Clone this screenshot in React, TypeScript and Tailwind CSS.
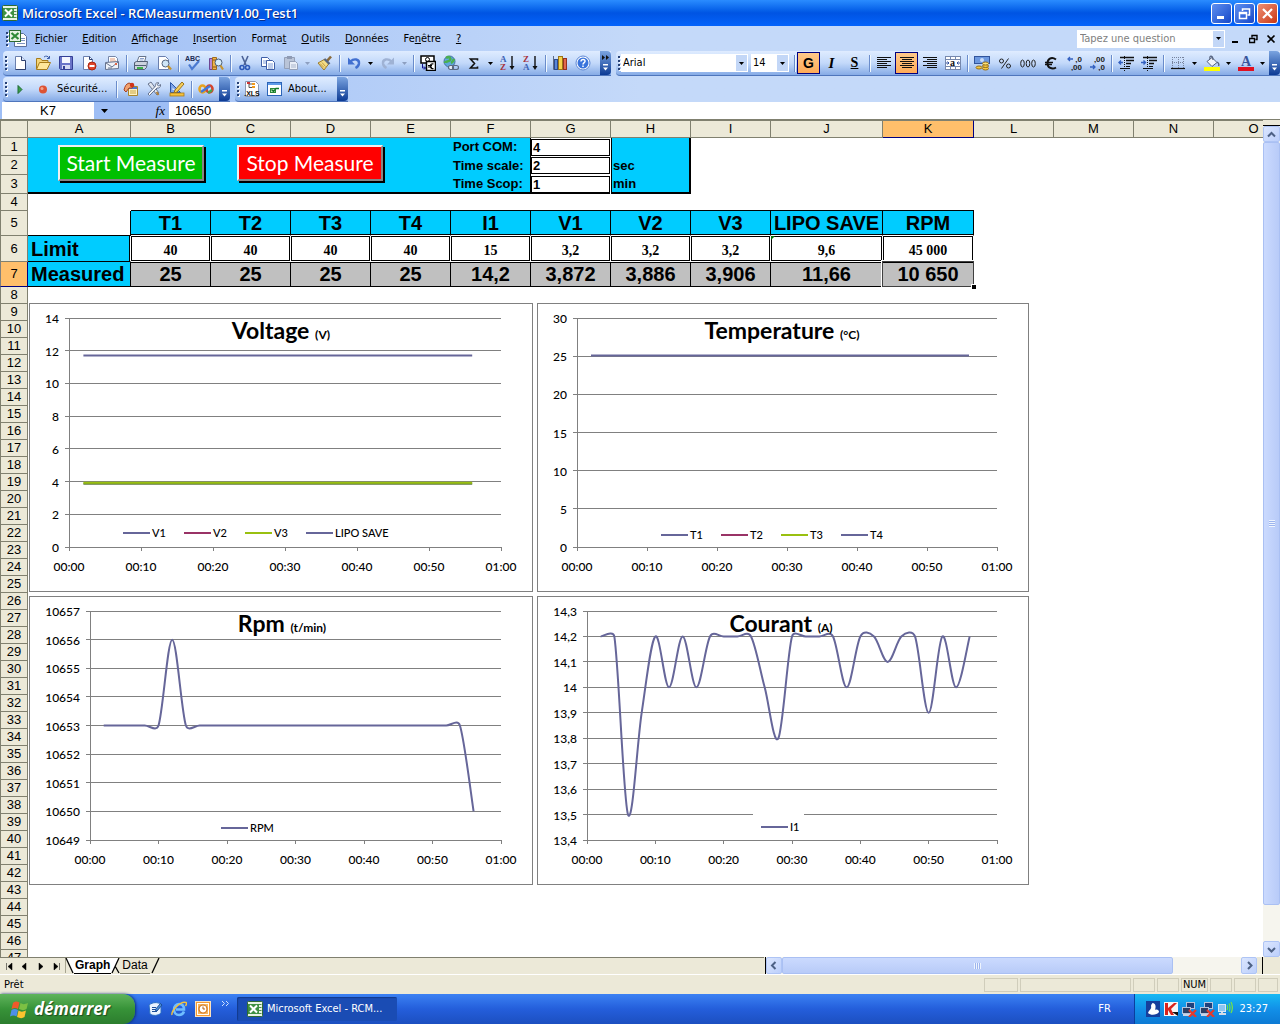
import type { ReactNode } from "react";

/* ------------------------------------------------------------------ */
/* Toolbar icons                                                       */
/* ------------------------------------------------------------------ */

const Svg = ({ children, w = 16, h = 16 }: { children: ReactNode; w?: number; h?: number }) => (
  <svg width={w} height={h} viewBox={`0 0 ${w} ${h}`} fill="none" aria-hidden="true" className="block shrink-0">
    {children}
  </svg>
);

const ExcelIcon = () => (
  <Svg>
    <rect x="0.5" y="0.5" width="15" height="15" rx="1" fill="#e8f3e4" stroke="#2f6b33" />
    <path d="M12 3.500h2.500M12 6.500h2.500M12 9.500h2.500M12 12.500h2.500" stroke="#4b8f4e" />
    <rect x="1" y="3" width="11" height="10" fill="#3f9142" />
    <path d="M3 4.500l7 7M10 4.500l-7 7" stroke="#fff" strokeWidth="2" />
  </Svg>
);
const BookIcon = () => (
  <Svg w={18} h={17}>
    <path d="M5.500 3.500h9l3 3v10h-12z" fill="#fff" stroke="#5a6f9c" />
    <path d="M12 8.500h4M12 10.500h4M8 13.500h8" stroke="#7d93c0" />
    <rect x="0.500" y="0.500" width="11" height="11" fill="#e8f3e4" stroke="#2f6b33" />
    <path d="M2.500 3l7 6M9.500 3l-7 6" stroke="#2f8a36" strokeWidth="2.200" />
  </Svg>
);
const NewIcon = () => (
  <Svg>
    <path d="M3.500 1.500h6l4 4v9h-10z" fill="#fff" stroke="#6a7fae" />
    <path d="M13.500 5.500v9h-10" stroke="#2b3e6e" />
    <path d="M9.500 1.500v4h4" fill="#d9e5fa" stroke="#2b3e6e" />
  </Svg>
);
const OpenIcon = () => (
  <Svg>
    <path d="M1.500 14V3.500h4l1.500 2h6V8" fill="#f5d67a" stroke="#a67c1c" />
    <path d="M1.500 14.500l3-7h11l-3.500 7z" fill="#ffe79a" stroke="#a67c1c" />
    <path d="M9 2c2-1.500 4-1 5 1M14.500 1v2.500H12" stroke="#3a5ca8" />
  </Svg>
);
const SaveIcon = () => (
  <Svg>
    <path d="M1.500 1.500h13v13h-12l-1-1z" fill="#6a74c8" stroke="#343f96" />
    <rect x="4" y="2" width="8" height="6" fill="#f4f6ff" />
    <rect x="4" y="10" width="8" height="4" fill="#d4d8f2" />
    <rect x="5" y="11" width="2" height="3" fill="#343f96" />
  </Svg>
);
const PermissionIcon = () => (
  <Svg>
    <path d="M2.500 1.500h6l3 3v10h-9z" fill="#fff" stroke="#6a7fae" />
    <path d="M8.500 1.500v3h3" stroke="#2b3e6e" />
    <circle cx="11" cy="11" r="4" fill="#e0442a" stroke="#a82612" />
    <path d="M8.500 11h5" stroke="#fff" strokeWidth="2" />
  </Svg>
);
const MailIcon = () => (
  <Svg>
    <path d="M4.500 7V1.500h7l2 2V7" fill="#fff" stroke="#7686a8" />
    <path d="M6 4h5M6 6h6" stroke="#e09a7a" />
    <path d="M1.500 7.500l13-1v7l-13 1z" fill="#f0f3f9" stroke="#67748f" />
    <path d="M2 8l6 4 6-5M4 13h4" stroke="#67748f" />
    <rect x="11" y="8" width="2" height="2" fill="#e0674a" />
  </Svg>
);
const PrintIcon = () => (
  <Svg>
    <path d="M4 7l2-5.500h7L11.500 7" fill="#fff" stroke="#66748c" />
    <path d="M1.500 7.500l2-1h11l-1 6-2 2h-10z" fill="#ccd3de" stroke="#525e74" />
    <path d="M2 10.500h11" stroke="#525e74" />
    <path d="M4 13h6" stroke="#3bb14a" strokeWidth="2" />
    <path d="M7 3.500h4M6.500 5h4" stroke="#8aa0cc" />
  </Svg>
);
const PreviewIcon = () => (
  <Svg>
    <path d="M2.500 1.500h7l3 3v10h-10z" fill="#fff" stroke="#6a7fae" />
    <circle cx="9.500" cy="8.500" r="3.500" fill="#cfe6f7" stroke="#55667f" />
    <path d="M12 11l3 3.500" stroke="#c7952f" strokeWidth="2.400" />
  </Svg>
);
const SpellIcon = () => (
  <Svg>
    <text x="0" y="6" fontSize="7" fontWeight="700" fill="#1d2c55" fontFamily="Liberation Sans, sans-serif">ABC</text>
    <path d="M4 9.500l3 4.500 7-8" stroke="#4a79d0" strokeWidth="2.200" />
  </Svg>
);
const ResearchIcon = () => (
  <Svg>
    <path d="M1.500 3.500h3v11h-3z" fill="#b78ad4" stroke="#6e4593" />
    <path d="M4.500 2.500h4v12h-4z" fill="#f0b64a" stroke="#a06b1a" />
    <path d="M5 5h3M5 12h3" stroke="#8b4f17" />
    <circle cx="10.500" cy="7.500" r="3.500" fill="#d5ecf8" stroke="#4b5d77" />
    <path d="M12.500 10.500l2.500 4" stroke="#c7952f" strokeWidth="2.200" />
  </Svg>
);
const CutIcon = () => (
  <Svg>
    <path d="M5 1l4 9M11 1L7 10" stroke="#4b6296" strokeWidth="1.600" />
    <circle cx="5" cy="12.500" r="2" stroke="#2c58b8" strokeWidth="1.600" />
    <circle cx="10.500" cy="12.500" r="2" stroke="#2c58b8" strokeWidth="1.600" />
  </Svg>
);
const CopyIcon = () => (
  <Svg>
    <path d="M1.500 2.500h6l2 2v7h-8z" fill="#fff" stroke="#3f5fa8" />
    <path d="M3 6h4M3 8h4" stroke="#7f9cd8" />
    <path d="M6.500 5.500h6l2 2v7h-8z" fill="#fff" stroke="#3f5fa8" />
    <path d="M8 9h5M8 11h5M8 13h5" stroke="#7f9cd8" />
  </Svg>
);
const PasteIcon = () => (
  <Svg>
    <path d="M1.500 2.500h10v11h-10z" fill="#b9c4d8" stroke="#94a0b8" />
    <rect x="4" y="1" width="5" height="3" fill="#8f9bb4" />
    <path d="M6.500 6.500h6l2 2v6h-8z" fill="#e9eef7" stroke="#94a0b8" />
    <path d="M8 10h5M8 12h5" stroke="#a9b5cc" />
  </Svg>
);
const PainterIcon = () => (
  <Svg>
    <path d="M10 6l4-4.500" stroke="#8a6a3a" strokeWidth="2.600" />
    <path d="M1 8l7-4 4 4.500-5 6.500z" fill="#f3dc86" stroke="#9b7a2b" />
    <path d="M7.500 4l5 5" stroke="#57657f" strokeWidth="2.400" />
    <path d="M3 8.500l4 4M5 7.500l3.500 4" stroke="#c49b3b" />
  </Svg>
);
const UndoIcon = () => (
  <Svg>
    <path d="M4.500 6.500C8 3 13.500 4 13 8.500c-.3 2-1.500 3.500-3.500 4.500" stroke="#4270d0" strokeWidth="2.400" />
    <path d="M2 2.500v7h7z" fill="#4270d0" />
  </Svg>
);
const RedoIcon = () => (
  <Svg>
    <path d="M11.500 6.500C8 3 2.500 4 3 8.500c.3 2 1.500 3.500 3.500 4.500" stroke="#9fb2d4" strokeWidth="2.400" />
    <path d="M14 2.500v7H7z" fill="#9fb2d4" />
  </Svg>
);
const EuroConvertIcon = () => (
  <Svg>
    <rect x="1" y="1" width="13" height="7" fill="#fff" stroke="#000" strokeWidth="1.500" />
    <circle cx="7.500" cy="4.500" r="2" stroke="#000" />
    <rect x="6.500" y="6.500" width="9" height="9" fill="#fff" stroke="#000" strokeWidth="1.500" />
    <path d="M13.500 9c-4-1.500-4.500 5.500 0 4.500M8 10.500h4M8 12h4" stroke="#000" strokeWidth="1.200" />
    <path d="M2.500 9v4h3M4 11.500L5.500 13 4 14.500" stroke="#10108c" />
  </Svg>
);
const LinkIcon = () => (
  <Svg>
    <circle cx="6.500" cy="6.500" r="5.500" fill="#5fa7dd" stroke="#44719d" />
    <path d="M3 3c3-2 5 0 4 2S2 6 2 8M8 8c2-1 3-4 3-4" stroke="#4bb04f" strokeWidth="2.600" />
    <rect x="5.500" y="10.500" width="5" height="4" rx="2" fill="#e8edf5" stroke="#5a6880" strokeWidth="1.200" />
    <rect x="9.500" y="10.500" width="6" height="4" rx="2" stroke="#5a6880" strokeWidth="1.200" />
  </Svg>
);
const SigmaIcon = () => (
  <Svg>
    <path d="M11.500 5.500V4H4.500l4 4.500-4 4.500h7v-1.500" stroke="#111" strokeWidth="1.600" />
  </Svg>
);
const SortIcon = ({ top, bottom }: { top: string; bottom: string }) => (
  <Svg>
    <text x="0" y="7" fontSize="9" fontWeight="700" fill={top === "A" ? "#3d63b5" : "#a8333c"} fontFamily="Liberation Serif, serif">{top}</text>
    <text x="0" y="15" fontSize="9" fontWeight="700" fill={bottom === "A" ? "#3d63b5" : "#a8333c"} fontFamily="Liberation Serif, serif">{bottom}</text>
    <path d="M12 1v12" stroke="#111" strokeWidth="1.400" />
    <path d="M9.500 11h5L12 15z" fill="#111" />
  </Svg>
);
const ChartIcon = () => (
  <Svg>
    <path d="M1.500 1v13.500H15" stroke="#5d6b86" />
    <rect x="2.500" y="4.500" width="3" height="10" fill="#5a86d8" stroke="#2d4b8e" />
    <rect x="6.500" y="1.500" width="4" height="13" fill="#f6d24b" stroke="#9b7416" />
    <rect x="11.500" y="3.500" width="3" height="11" fill="#e2694b" stroke="#963220" />
  </Svg>
);
const HelpIcon = () => (
  <Svg>
    <circle cx="8" cy="8" r="7" fill="#fff" stroke="#5c86d4" />
    <circle cx="8" cy="8" r="5.500" fill="#3a74dc" />
    <path d="M6 6.500c0-3 4.500-2.500 4 0-.2 1.200-2 1.300-2 3M8 10.500V12" stroke="#fff" strokeWidth="1.500" />
  </Svg>
);
const PlayIcon = () => (
  <Svg>
    <path d="M6 4.500v8l4-4z" fill="#3aa04a" stroke="#1f6b33" />
  </Svg>
);
const RecordIcon = () => (
  <Svg>
    <circle cx="8" cy="8.500" r="4" fill="#dd5334" />
    <circle cx="7" cy="7.500" r="1.500" fill="#f3a48e" />
  </Svg>
);
const ScriptIcon = () => (
  <Svg>
    <path d="M5.500 5.500h9v9h-9z" fill="#fff3c4" stroke="#a8862f" />
    <path d="M6 7h8" stroke="#4a79d0" strokeWidth="2" />
    <path d="M7 10h6M7 12h6" stroke="#c9a544" />
    <path d="M1 9c1-4 2-6 5-7l5 2-2 3-3 0-3 4z" fill="#f0a270" stroke="#a8401e" />
    <circle cx="9" cy="4" r="2.200" fill="#d0341c" />
  </Svg>
);
const ToolsIcon = () => (
  <Svg>
    <path d="M2 3l3-2 8 11-2 2z" fill="#dfe5ef" stroke="#67748f" />
    <path d="M13 2c-3-1-4 1-3.500 3L2 13l1.500 1.500L11 7c2 .5 4-1 3.500-3.500L12.500 5 11 3.500z" fill="#f2f5fa" stroke="#67748f" />
    <path d="M10.500 11l2 3" stroke="#b08038" strokeWidth="2" />
  </Svg>
);
const RulerIcon = () => (
  <Svg>
    <path d="M1.500 1.500v10h10z" fill="#7ea5ea" stroke="#2b55a8" />
    <path d="M3.500 6.500v2.500H6z" fill="#dce8fb" />
    <path d="M6 9l7-8 2 2-7 8-3 1z" fill="#f7cf5a" stroke="#99731c" />
    <rect x="1" y="12" width="14" height="3" fill="#f5c23d" stroke="#a87b15" strokeWidth="0.800" />
  </Svg>
);
const InfinityIcon = () => (
  <Svg>
    <ellipse cx="4.500" cy="8" rx="3" ry="3.500" stroke="#e8a31e" strokeWidth="2.600" />
    <ellipse cx="11.500" cy="8" rx="3" ry="3.500" stroke="#d6452c" strokeWidth="2.600" />
    <path d="M3 11l9-6" stroke="#3f78d8" strokeWidth="2.400" />
    <path d="M10 12l4-3" stroke="#46a64c" strokeWidth="2.200" />
  </Svg>
);
const XlsIcon = () => (
  <Svg>
    <path d="M1.500 .5h10l3 3v12h-13z" fill="#fff" stroke="#8a97b2" />
    <path d="M5 1.500v5M5 3h4M5 6.500h4" stroke="#555" />
    <rect x="3" y="1" width="3" height="2" fill="#c33" />
    <rect x="8" y="2" width="3" height="2" fill="#f09a1c" />
    <rect x="8" y="5" width="3" height="2" fill="#f09a1c" />
    <text x="8" y="15" textAnchor="middle" fontSize="7" fontWeight="700" fill="#111" fontFamily="Liberation Sans, sans-serif">.XLS</text>
  </Svg>
);
const AboutIcon = () => (
  <Svg>
    <rect x="0.500" y="1.500" width="14" height="13" fill="#fff" stroke="#2b64b8" />
    <rect x="1" y="2" width="13" height="2" fill="#5f9be8" />
    <rect x="3.500" y="7.500" width="5" height="4" fill="#b8e6b4" stroke="#2c8a3a" />
    <path d="M4.500 8.500l2 2L9 7.500h3" stroke="#167a2a" strokeWidth="1.300" />
  </Svg>
);
const AlignIcon = ({ kind }: { kind: "left" | "center" | "right" }) => {
  const x = { left: 1, center: 3, right: 5 }[kind];
  return (
    <Svg>
      <g fill="#111">
        {[2, 6, 10].map((y) => (
          <rect key={y} x="1" y={y} width="14" height="1" />
        ))}
        {[4, 8, 12].map((y) => (
          <rect key={y} x={x} y={y} width="10" height="1" />
        ))}
      </g>
    </Svg>
  );
};
const MergeIcon = () => (
  <Svg>
    <rect x="0.500" y="1.500" width="15" height="13" fill="#fff" stroke="#7688ad" />
    <path d="M0 4.500h16M0 11.500h16M5.500 1v3M10.500 1v3M5.500 12v3M10.500 12v3" stroke="#7688ad" />
    <text x="5" y="11" fontSize="10" fontWeight="700" fill="#111" fontFamily="Liberation Serif, serif">a</text>
    <path d="M1 8h3M12 8h3M2.500 6.500L4 8 2.500 9.500M13.500 6.500L12 8l1.500 1.500" stroke="#3050a0" />
  </Svg>
);
const CurrencyIcon = () => (
  <Svg>
    <rect x="0.500" y="1.500" width="15" height="7" fill="#6c98e0" stroke="#31549c" />
    <circle cx="8" cy="5" r="2" fill="#c9dcf8" />
    <ellipse cx="11.500" cy="13.500" rx="3" ry="1.500" fill="#f5c842" stroke="#96701a" />
    <ellipse cx="11.500" cy="11" rx="3" ry="1.500" fill="#f5c842" stroke="#96701a" />
    <ellipse cx="11.500" cy="8.500" rx="3" ry="1.500" fill="#fbe07a" stroke="#96701a" />
    <ellipse cx="5" cy="12.500" rx="3" ry="1.500" fill="#f5c842" stroke="#96701a" />
  </Svg>
);
const PercentIcon = () => (
  <Svg>
    <circle cx="4.500" cy="6" r="2" stroke="#222" />
    <circle cx="11.500" cy="11" r="2" stroke="#222" />
    <path d="M11.500 3.500l-7 10" stroke="#222" />
  </Svg>
);
const ThousandsIcon = () => (
  <Svg>
    {[2.5, 8, 13.5].map((x) => (
      <ellipse key={x} cx={x} cy="8.500" rx="1.800" ry="3.500" stroke="#222" />
    ))}
  </Svg>
);
const EuroIcon = () => (
  <Svg>
    <path d="M13 4.500C8 1 4.500 4.500 4.500 8.500S9 15 13 12.500" stroke="#111" strokeWidth="2" />
    <path d="M2 7.500h8M2 9.500h7" stroke="#111" strokeWidth="1.300" />
  </Svg>
);
const DecimalIcon = ({ more }: { more: boolean }) => (
  <Svg>
    <g fontSize="8" fontWeight="700" fill="#222" fontFamily="Liberation Sans, sans-serif">
      <text x="16" y="7" textAnchor="end">{more ? ",0" : ",00"}</text>
      <text x="16" y="15" textAnchor="end">{more ? ",00" : ",0"}</text>
    </g>
    {more ? (
      <path d="M7 4H2M4 2L2 4l2 2" stroke="#3360c0" strokeWidth="1.300" />
    ) : (
      <path d="M1 12h5M4 10l2 2-2 2" stroke="#3360c0" strokeWidth="1.300" />
    )}
  </Svg>
);
const IndentIcon = ({ right }: { right: boolean }) => (
  <Svg>
    <path d="M2 2.500h14M8 5.500h8M8 8.500h5" stroke="#111" strokeWidth="1.600" />
    <path d="M8 11.500h4M2 13.500h10" stroke="#111" strokeWidth="1.200" />
    <path d="M6.500 1v15" stroke="#111" strokeDasharray="1 1" />
    {right ? (
      <path d="M0 7.500h4M2.500 5.500l2 2-2 2" stroke="#3360c0" strokeWidth="1.400" />
    ) : (
      <path d="M5 7.500H1M3 5.500l-2 2 2 2" stroke="#3360c0" strokeWidth="1.400" />
    )}
  </Svg>
);
const BordersIcon = () => (
  <Svg>
    <path d="M2.500 2v11M8.500 2v11M13.500 2v11M2 2.500h12M2 7.500h12" stroke="#77839c" strokeDasharray="1 1" />
    <path d="M1 13.500h14" stroke="#111" strokeWidth="1.200" />
  </Svg>
);
const FillIcon = () => (
  <Svg>
    <path d="M3 6.500l5-4 5 5-5 4z" fill="#f1f4fa" stroke="#55627e" />
    <path d="M6 4C5 0 9 0 9 5M13 7c2 1 2 3 1.500 4" stroke="#55627e" strokeWidth="1.200" />
    <rect x="0" y="12" width="16" height="4" fill="#ffff00" />
  </Svg>
);
const FontColorIcon = () => (
  <Svg>
    <text x="3" y="11" fontSize="14" fontWeight="700" fill="#39559b" fontFamily="Liberation Serif, serif">A</text>
    <rect x="0" y="12" width="16" height="4" fill="#e01020" />
  </Svg>
);
const FlagIcon = () => (
  <Svg w={20} h={20}>
    <path d="M3 4c2-2 4-2 6.500-.5L8 10C6 8.500 4 8.500 1.500 10z" fill="#f0592b" />
    <path d="M10.500 4c2 1.500 4 1.500 7.500 0l-1.500 6c-2 1.500-4.500 1.500-7.500 0z" fill="#7cc043" />
    <path d="M1.500 11c2-1.500 4-1.500 6.500 0l-1.500 6.500c-2-1.500-4-1.500-6.500 0z" fill="#4e8fe8" />
    <path d="M8.500 11.500c2 1.500 4.500 1.500 7.500 0L14.500 18c-2 1.500-4.500 1.500-7.500 0z" fill="#fdc32f" />
  </Svg>
);
const DesktopIcon = () => (
  <Svg>
    <path d="M2 4c4-3 8-3 12-1v9c-3 3-8 3-11 1z" fill="#e9f3ff" stroke="#2a6dc4" />
    <path d="M5 6.500h4M5 8.500h3M5 10.500h5" stroke="#1b4d99" />
    <path d="M8 9l5.500-6.500L15 4l-5 6z" fill="#4a90d9" stroke="#1b4d99" />
  </Svg>
);
const IeIcon = () => (
  <Svg>
    <path d="M13 10.500C12 13 10 14 8 14c-3 0-5-2.500-5-5.500S5 3 8 3s5 2 5 5.500H5" stroke="#6fbdff" strokeWidth="2.600" />
    <path d="M1 14C0 10 9 0 15 1.500c1 .5.500 2-.5 3.500" stroke="#f5c33b" strokeWidth="1.400" />
  </Svg>
);
const OutlookIcon = () => (
  <Svg>
    <rect x="0.500" y="0.500" width="15" height="15" fill="#f39a35" stroke="#fbe1bd" />
    <rect x="2.500" y="2.500" width="11" height="11" fill="#f8b65e" stroke="#fff" />
    <circle cx="8" cy="8" r="4" fill="#fff" stroke="#d1731a" strokeWidth="1.200" />
    <path d="M8 5.500V8h2" stroke="#b35c10" />
  </Svg>
);
const BirdIcon = () => (
  <Svg>
    <rect width="14" height="16" x="1" fill="#163f9c" />
    <path d="M8 2c3 1 3 4 2 7 2-1 4 0 4 2-2 3-8 4-11 1C4 9 7 8 6 5c0-1 1-3 2-3z" fill="#fff" />
  </Svg>
);
const KasperskyIcon = () => (
  <Svg>
    <rect x="1" y="1" width="14" height="14" fill="#f5f5f5" />
    <path d="M2 2h3v5l6-5h3L8 8l3 6H8L5 9v5H2z" fill="#d8231c" />
    <path d="M9 11l6 4v-4z" fill="#111" />
  </Svg>
);
const NetOffIcon = () => (
  <Svg>
    <rect x="5.500" y="1.500" width="8" height="6" fill="#20407c" stroke="#b5c4dd" />
    <rect x="1.500" y="6.500" width="8" height="6" fill="#2b3f66" stroke="#b5c4dd" />
    <rect x="2" y="13" width="8" height="2" fill="#c9d3e6" />
    <path d="M8 9l7 7M15 9l-7 7" stroke="#e8392a" strokeWidth="2.200" />
  </Svg>
);
const WirelessIcon = () => (
  <Svg>
    <rect x="1.500" y="3.500" width="7" height="7" fill="#8cc6f2" stroke="#d8e8f8" />
    <path d="M2 13h7M5 11v2" stroke="#d4dbe6" strokeWidth="2" />
    <path d="M10 4c1 2 1 3 0 5M12 2.500c1.500 3 1.500 5 0 8M14 1c2 4 2 7 0 11" stroke="#6fe04e" strokeWidth="1.300" />
  </Svg>
);
const Chevron = ({ d }: { d: string }) => (
  <Svg w={9} h={9}>
    <path d={d} stroke="#4d6185" strokeWidth="2" />
  </Svg>
);

/* ------------------------------------------------------------------ */
/* Toolbar parts                                                       */
/* ------------------------------------------------------------------ */

const Tool = ({ label, active, children }: { label: string; active?: boolean; children: ReactNode }) => (
  <button
    type="button"
    aria-label={label}
    aria-pressed={active}
    className={
      active
        ? "flex h-[22px] w-[23px] shrink-0 items-center justify-center border border-[#000080] bg-linear-to-b from-[#ffc98a] to-[#ffab57]"
        : "flex h-[22px] w-[23px] shrink-0 items-center justify-center"
    }
  >
    {children}
  </button>
);
const Drop = ({ label, muted }: { label: string; muted?: boolean }) => (
  <button type="button" aria-label={label} className="flex h-[22px] w-[11px] shrink-0 items-center justify-center">
    <Svg w={5} h={3}>
      <path d="M0 0h5L2.500 3z" fill={muted ? "#8d9fc0" : "#000"} />
    </Svg>
  </button>
);
const Sep = () => (
  <span className="flex w-1.5 shrink-0 justify-center py-1">
    <span className="h-[17px] w-px bg-[#6a8ccb] shadow-[1px_0_0_0_#f1f9ff]" />
  </span>
);
const Grip = () => (
  <span className="flex w-[5px] shrink-0 flex-col items-center gap-0.5 pl-px">
    {[0, 1, 2, 3].map((i) => (
      <span key={i} className="size-0.5 bg-[#274176] shadow-[1px_1px_0_0_#fff]" />
    ))}
  </span>
);
const BarEnd = ({ more }: { more?: boolean }) => (
  <button
    type="button"
    aria-label="Options de barre d'outils"
    className="flex w-[11px] shrink-0 flex-col items-center justify-between self-stretch rounded-r-sm bg-linear-to-b from-[#7ba4e0] to-[#0c3a94] py-1"
  >
    <Svg w={9} h={5}>{more && <path d="M1 0l3 2.500-3 2.500zM5 0l3 2.500L5 5z" fill="#111" />}</Svg>
    <Svg w={7} h={7}>
      <path d="M1 0h5v1.500H1zM1 3.500h5L3.500 6.500z" fill="#fff" />
    </Svg>
  </button>
);
const BAR = "flex h-[25px] items-center rounded-l-sm bg-linear-to-b from-[#dfecff] via-[#c3d9fa] to-[#86abe6] border-b border-[#4f76bc]";

const Combo = ({ label, value, size }: { label: string; value: string; size: "wide" | "narrow" }) => (
  <label className={size === "wide" ? "relative block w-[127px]" : "relative ml-[3px] block w-[38px]"}>
    <select
      aria-label={label}
      defaultValue={value}
      className="block h-[18px] w-full appearance-none bg-white pl-0.5 text-[11px] leading-[18px] text-black"
    >
      <option>{value}</option>
    </select>
    <span className="pointer-events-none absolute inset-y-px right-px flex w-[11px] items-center justify-center bg-[#c3d7f7]">
      <Svg w={5} h={3}>
        <path d="M0 0h5L2.500 3z" fill="#000" />
      </Svg>
    </span>
  </label>
);

const MENUS: [string, string, string][] = [
  ["", "F", "ichier"],
  ["", "E", "dition"],
  ["", "A", "ffichage"],
  ["", "I", "nsertion"],
  ["Forma", "t", ""],
  ["", "O", "utils"],
  ["", "D", "onnées"],
  ["Fe", "n", "être"],
  ["", "?", ""],
];

/* ------------------------------------------------------------------ */
/* Charts                                                              */
/* ------------------------------------------------------------------ */

type Pt = [number, number];

/* Smoothed line whose control arms never exceed half of their segment. */
function smooth(pts: Pt[]): string {
  const arm = (from: Pt, prev: Pt, next: Pt, seg: number, sign: number): Pt => {
    let vx = (next[0] - prev[0]) / 6;
    let vy = (next[1] - prev[1]) / 6;
    const len = Math.hypot(vx, vy);
    if (len > seg / 2) {
      vx *= seg / 2 / len;
      vy *= seg / 2 / len;
    }
    return [from[0] + sign * vx, from[1] + sign * vy];
  };
  let d = `M${pts[0][0]} ${pts[0][1]}`;
  for (let i = 0; i < pts.length - 1; i++) {
    const a = pts[i];
    const b = pts[i + 1];
    const seg = Math.hypot(b[0] - a[0], b[1] - a[1]);
    const c1 = arm(a, pts[i - 1] ?? a, b, seg, 1);
    const c2 = arm(b, a, pts[i + 2] ?? b, seg, -1);
    d += `C${c1[0]} ${c1[1]} ${c2[0]} ${c2[1]} ${b[0]} ${b[1]}`;
  }
  return d;
}

interface ChartProps {
  title: string;
  unit: string;
  titleX: number;
  width: number;
  left: number;
  right: number;
  min: number;
  max: number;
  step: number;
  series: { color: string; values: number[] }[];
  legend: { x: number; y: number; gap: number; items: [string, string][]; mask?: boolean };
}

const TOP = 14;
const BOTTOM = 243;

function Chart({ title, unit, titleX, width, left, right, min, max, step, series, legend }: ChartProps) {
  const count = Math.round((max - min) / step);
  const yOf = (v: number) => BOTTOM - ((v - min) / (max - min)) * (BOTTOM - TOP);
  const xOf = (t: number) => left + (t / 60) * (right - left);
  return (
    <figure className="border border-[#808080] bg-white">
      <svg width={width} height={287} viewBox={`0 0 ${width} 287`} className="block" role="img" aria-label={title}>
        <g stroke="#808080" strokeWidth="1" shapeRendering="crispEdges">
          {Array.from({ length: count + 1 }, (_, i) => {
            const y = Math.floor(yOf(min + i * step)) + 0.5;
            return <line key={i} x1={left - 4} x2={right} y1={y} y2={y} />;
          })}
          <line x1={left + 0.5} x2={left + 0.5} y1={TOP} y2={BOTTOM} />
          {Array.from({ length: 7 }, (_, i) => {
            const x = Math.floor(xOf(i * 10)) + 0.5;
            return <line key={i} x1={x} x2={x} y1={BOTTOM} y2={BOTTOM + 4} />;
          })}
        </g>
        {legend.mask && <rect x={legend.x - 8} y={legend.y - 17} width="51" height="28" fill="#fff" />}
        <g fontFamily="Lato, sans-serif" fontSize="12" fontWeight="500" fill="#000">
          {Array.from({ length: count + 1 }, (_, i) => (
            <text key={i} x={left - 10} y={yOf(min + i * step) + 5} textAnchor="end">
              {String(Number((min + i * step).toFixed(1))).replace(".", ",")}
            </text>
          ))}
          {["00:00", "00:10", "00:20", "00:30", "00:40", "00:50", "01:00"].map((t, i) => (
            <text key={t} x={xOf(i * 10)} y={BOTTOM + 24} textAnchor="middle">
              {t}
            </text>
          ))}
          {legend.items.map(([name, color], i) => (
            <g key={name}>
              <line x1={legend.x + i * legend.gap} x2={legend.x + i * legend.gap + 27} y1={legend.y} y2={legend.y} stroke={color} strokeWidth="2" />
              <text x={legend.x + i * legend.gap + 29} y={legend.y + 4} fontSize="11">
                {name}
              </text>
            </g>
          ))}
        </g>
        {series.map((s, i) => (
          <path
            key={i}
            d={smooth(s.values.map((v, n): Pt => [xOf(2 + n * 2), yOf(v)]))}
            fill="none"
            stroke={s.color}
            strokeWidth="2"
          />
        ))}
        <text x={titleX} y="35" textAnchor="middle" fontFamily="Lato, sans-serif" fontWeight="700" fontSize="23" fill="#000">
          {title} <tspan fontSize="12">{unit}</tspan>
        </text>
      </svg>
    </figure>
  );
}

const VIOLET = "#666699";
const PLUM = "#993366";
const GREEN = "#99c010";
const flat = (v: number) => Array.from({ length: 28 }, () => v);
const RPM = flat(10653).map((v, i) => (i === 5 ? 10656 : i === 27 ? 10650 : v));
const CURRENT = [
  14.2, 14.2, 13.5, 13.9, 14.2, 14, 14.2, 14, 14.2, 14.2, 14.2, 14.2, 14, 13.8, 14.2, 14.2, 14.2, 14.2, 14, 14.2, 14.2,
  14.1, 14.2, 14.2, 13.9, 14.2, 14, 14.2,
];

/* ------------------------------------------------------------------ */
/* Worksheet                                                           */
/* ------------------------------------------------------------------ */

const COLS: [string, string][] = [
  ["A", "w-[103px]"],
  ["B", "w-20"],
  ["C", "w-20"],
  ["D", "w-20"],
  ["E", "w-20"],
  ["F", "w-20"],
  ["G", "w-20"],
  ["H", "w-20"],
  ["I", "w-20"],
  ["J", "w-28"],
  ["K", "w-[91px]"],
  ["L", "w-20"],
  ["M", "w-20"],
  ["N", "w-20"],
  ["O", "w-20"],
];

const HEADS = ["T1", "T2", "T3", "T4", "I1", "V1", "V2", "V3", "LIPO SAVE", "RPM"];
const LIMITS = ["40", "40", "40", "40", "15", "3,2", "3,2", "3,2", "9,6", "45 000"];
const MEASURED = ["25", "25", "25", "25", "14,2", "3,872", "3,886", "3,906", "11,66", "10 650"];

const RowHead = ({ n, selected }: { n: number; selected?: boolean }) => (
  <th
    scope="row"
    className={
      selected
        ? "overflow-hidden border-r border-b border-l border-[#000080] border-l-[#808080] bg-[#ffbf6b] p-0 text-[13px] leading-4 font-normal"
        : "overflow-hidden border-r border-b border-l border-[#80806f] bg-[#ece9d8] p-0 text-[13px] leading-4 font-normal"
    }
  >
    {n}
  </th>
);

const Param = ({ n, label, value, unit, last }: { n: number; label: string; value: string; unit: string; last?: boolean }) => (
  <>
    <td
      className={
        last
          ? "border-r border-b-2 border-black bg-[#00ccff] p-0 pl-0.5 text-left text-[13px] leading-4 font-bold whitespace-nowrap"
          : "border-r border-black bg-[#00ccff] p-0 pl-0.5 text-left text-[13px] leading-4 font-bold whitespace-nowrap"
      }
    >
      <label htmlFor={`param-${n}`}>{label}</label>
    </td>
    <td className="bg-white p-0">
      <input
        id={`param-${n}`}
        defaultValue={value}
        className={
          last
            ? "block h-[18px] w-[79px] border border-b-2 border-black px-px text-[13px] leading-4 font-bold"
            : "block h-[17px] w-[79px] border border-black px-px text-[13px] leading-4 font-bold"
        }
      />
    </td>
    <td
      className={
        last
          ? "border-r-2 border-b-2 border-l border-black bg-[#00ccff] p-0 px-px text-left text-[13px] leading-4 font-bold"
          : "border-r-2 border-l border-black bg-[#00ccff] p-0 px-px text-left text-[13px] leading-4 font-bold"
      }
    >
      {unit}
    </td>
    <td colSpan={7} className="p-0" />
  </>
);

function Sheet() {
  return (
    <div className="relative min-w-0 flex-1 overflow-hidden bg-white font-['Liberation_Sans',Arial,sans-serif] text-black">
      <table className="w-[1294px] table-fixed border-separate border-spacing-0">
        <colgroup>
          <col className="w-7" />
          {COLS.map(([c, w]) => (
            <col key={c} className={w} />
          ))}
        </colgroup>
        <thead>
          <tr className="h-[18px]">
            <th aria-label="Tout sélectionner" className="border border-[#80806f] bg-[#ece9d8] p-0" />
            {COLS.map(([c]) => (
              <th
                key={c}
                scope="col"
                className={
                  c === "K"
                    ? "border border-l-0 border-[#000080] border-t-[#80806f] bg-[#ffbf6b] p-0 text-[13px] leading-4 font-normal"
                    : "border border-l-0 border-[#80806f] bg-[#ece9d8] p-0 text-[13px] leading-4 font-normal"
                }
              >
                {c}
              </th>
            ))}
          </tr>
        </thead>
        <tbody className="text-center">
          <tr className="h-[18px]">
            <RowHead n={1} />
            <td colSpan={5} rowSpan={3} className="border-b-2 border-black bg-[#00ccff] p-0 align-top">
              <div className="flex gap-[33px] pt-[7px] pl-[30px] font-[Lato,'Comic_Sans_MS',sans-serif] text-[21px] leading-8 text-white">
                <button type="button" className="h-9 w-[146px] border-2 border-[#f0f0f0] border-r-[#868686] border-b-[#868686] bg-[#00c000] shadow-[2px_2px_0_0_#000]">
                  Start Measure
                </button>
                <button type="button" className="h-9 w-[146px] border-2 border-[#f0f0f0] border-r-[#868686] border-b-[#868686] bg-[#ff0000] shadow-[2px_2px_0_0_#000]">
                  Stop Measure
                </button>
              </div>
            </td>
            <Param n={1} label="Port COM:" value="4" unit="" />
          </tr>
          <tr className="h-[19px]">
            <RowHead n={2} />
            <Param n={2} label="Time scale:" value="2" unit="sec" />
          </tr>
          <tr className="h-[19px]">
            <RowHead n={3} />
            <Param n={3} label="Time Scop:" value="1" unit="min" last />
          </tr>
          <tr className="h-[17px]">
            <RowHead n={4} />
            <td className="p-0" />
            <td colSpan={10} className="border-b border-black p-0" />
            <td colSpan={4} className="p-0" />
          </tr>
          <tr className="h-[25px] text-[20px] leading-6 font-bold whitespace-nowrap">
            <RowHead n={5} />
            <td className="border-r border-b border-black p-0" />
            {HEADS.map((h) => (
              <td key={h} className="border-r border-b border-r-black border-b-white bg-[#00ccff] p-0 shadow-[inset_0_-1px_0_0_#000]">
                {h}
              </td>
            ))}
            <td colSpan={4} className="p-0" />
          </tr>
          <tr className="h-[26px]">
            <RowHead n={6} />
            <td className="border-r border-b border-r-white border-b-black bg-[#00ccff] p-0 pl-[3px] text-left text-[20px] leading-6 font-bold shadow-[inset_-1px_0_0_0_#000]">
              Limit
            </td>
            {LIMITS.map((v, i) => (
              <td
                key={i}
                className="relative border-r border-b border-white p-0 pt-1 font-['Liberation_Serif',serif] text-[14px] leading-4 font-bold shadow-[inset_0_0_0_1px_#000]"
              >
                {i === 8 && (
                  <span className="absolute top-0 left-0 size-0 border-2 border-transparent border-t-[#007000] border-l-[#007000]" />
                )}
                {v}
              </td>
            ))}
            <td colSpan={4} className="p-0" />
          </tr>
          <tr className="h-[25px] text-[20px] leading-6 font-bold whitespace-nowrap">
            <RowHead n={7} selected />
            <td className="border-r border-b border-black bg-[#00ccff] p-0 pl-[3px] text-left">Measured</td>
            {MEASURED.map((v, i) => (
              <td
                key={i}
                className="relative border-r border-b border-black bg-[#c0c0c0] p-0 shadow-[inset_0_1px_0_0_#000]"
              >
                {v}
                {i === 9 && (
                  <>
                    <span className="absolute -inset-0.5 border border-white" />
                    <span className="absolute -inset-px border border-[#404040]" />
                    <span className="absolute -right-[3px] -bottom-[3px] size-[5px] border-t border-l border-white bg-black" />
                  </>
                )}
              </td>
            ))}
            <td colSpan={4} className="p-0" />
          </tr>
          {Array.from({ length: 40 }, (_, i) => (
            <tr key={i} className="h-[17px]">
              <RowHead n={i + 8} />
              <td colSpan={15} className="p-0" />
            </tr>
          ))}
        </tbody>
      </table>

      {/* Chart objects float over the cells. */}
      <div className="absolute top-[183px] left-[29px] grid grid-cols-[504px_492px] gap-1">
        <Chart
          title="Voltage" unit="(V)" titleX={251} width={502} left={39} right={471} min={0} max={14} step={2}
          series={[
            { color: "#5f7a3a", values: flat(3.872) },
            { color: GREEN, values: flat(3.93) },
            { color: VIOLET, values: flat(11.7) },
          ]}
          legend={{ x: 93, y: 229, gap: 61, items: [["V1", VIOLET], ["V2", PLUM], ["V3", GREEN], ["LIPO SAVE", VIOLET]] }}
        />
        <Chart
          title="Temperature" unit="(°C)" titleX={244} width={490} left={39} right={459} min={0} max={30} step={5}
          series={[{ color: VIOLET, values: flat(25.1) }]}
          legend={{ x: 123, y: 231, gap: 60, items: [["T1", VIOLET], ["T2", PLUM], ["T3", GREEN], ["T4", VIOLET]] }}
        />
        <Chart
          title="Rpm" unit="(t/min)" titleX={252} width={502} left={60} right={471} min={10649} max={10657} step={1}
          series={[{ color: VIOLET, values: RPM }]}
          legend={{ x: 191, y: 231, gap: 60, items: [["RPM", VIOLET]] }}
        />
        <Chart
          title="Courant" unit="(A)" titleX={243} width={490} left={49} right={459} min={13.4} max={14.3} step={0.1}
          series={[{ color: VIOLET, values: CURRENT }]}
          legend={{ x: 223, y: 230, gap: 60, items: [["I1", VIOLET]], mask: true }}
        />
      </div>
    </div>
  );
}

/* ------------------------------------------------------------------ */
/* Page                                                                */
/* ------------------------------------------------------------------ */

const SCROLL_BTN =
  "flex shrink-0 items-center justify-center rounded-xs border border-[#aec4f5] bg-linear-to-br from-[#dbe6fe] to-[#bccffb]";

export default function App() {
  return (
    <div className="flex h-screen flex-col overflow-hidden bg-[#ece9d8] font-['DejaVu_Sans_Condensed','DejaVu_Sans',Tahoma,sans-serif] text-[11px] leading-4 text-black">
      {/* Title bar */}
      <header className="flex h-[26px] shrink-0 items-center gap-1 bg-linear-to-b from-[#2a8cff] via-[#0054e3] to-[#0463fb] pr-0.5 pl-0.5">
        <ExcelIcon />
        <h1 className="flex-1 font-['Open_Sans',sans-serif] text-[13px] font-semibold text-white [text-shadow:1px_1px_0_#0a2a80]">
          Microsoft Excel - RCMeasurmentV1.00_Test1
        </h1>
        <div className="flex gap-0.5">
          <button type="button" aria-label="Réduire" className="flex size-[21px] items-center justify-center rounded-[3px] border border-white bg-linear-to-br from-[#5f8ff0] to-[#1746c8]">
            <Svg w={13} h={13}><path d="M2 10.500h7" stroke="#fff" strokeWidth="3" /></Svg>
          </button>
          <button type="button" aria-label="Restaurer" className="flex size-[21px] items-center justify-center rounded-[3px] border border-white bg-linear-to-br from-[#5f8ff0] to-[#1746c8]">
            <Svg w={13} h={13}>
              <path d="M4.500 4V2h7v6H9.500" stroke="#fff" strokeWidth="1.500" />
              <path d="M1.500 5.500h7v6h-7zM1.500 6.500h7" stroke="#fff" strokeWidth="1.500" />
            </Svg>
          </button>
          <button type="button" aria-label="Fermer" className="flex size-[21px] items-center justify-center rounded-[3px] border border-white bg-linear-to-br from-[#ee8e72] to-[#c8330a]">
            <Svg w={13} h={13}><path d="M2 2l9 9M11 2l-9 9" stroke="#fff" strokeWidth="2.200" /></Svg>
          </button>
        </div>
      </header>

      {/* Menu and tool bars */}
      <div className="shrink-0 bg-linear-to-r from-[#9ebef5] to-[#c4d9f9] to-50%">
        <nav className="flex h-[25px] items-center pl-1">
          <Grip />
          <BookIcon />
          <ul className="flex flex-1 gap-[15px] pl-2">
            {MENUS.map(([a, k, b]) => (
              <li key={a + k + b}>
                <button type="button">
                  {a}
                  <u>{k}</u>
                  {b}
                </button>
              </li>
            ))}
          </ul>
          <label className="relative block w-[148px]">
            <input
              aria-label="Tapez une question"
              placeholder="Tapez une question"
              className="block h-[18px] w-full bg-white pl-[3px] text-[11px] placeholder:text-[#808080]"
            />
            <span className="absolute inset-y-px right-px flex w-[11px] items-center justify-center bg-[#c3d7f7]">
              <Svg w={5} h={3}><path d="M0 0h5L2.500 3z" fill="#000" /></Svg>
            </span>
          </label>
          <div className="flex gap-2 pr-1 pl-1.5">
            <button type="button" aria-label="Réduire le classeur">
              <Svg w={10} h={10}><path d="M1 8h6" stroke="#000" strokeWidth="2" /></Svg>
            </button>
            <button type="button" aria-label="Restaurer le classeur">
              <Svg w={9} h={10}><path d="M3 3.500V1.500h5v4H6.500M.5 4.500h5v4h-5z" stroke="#000" strokeWidth="1.400" /></Svg>
            </button>
            <button type="button" aria-label="Fermer le classeur">
              <Svg w={10} h={10}><path d="M1.500 1.500l7 7M8.500 1.500l-7 7" stroke="#000" strokeWidth="1.700" /></Svg>
            </button>
          </div>
        </nav>

        <div className="flex gap-[5px] pl-[3px]">
          <div className={BAR}>
            <Grip />
            <Tool label="Nouveau"><NewIcon /></Tool>
            <Tool label="Ouvrir"><OpenIcon /></Tool>
            <Tool label="Enregistrer"><SaveIcon /></Tool>
            <Tool label="Autorisation"><PermissionIcon /></Tool>
            <Tool label="Message"><MailIcon /></Tool>
            <Sep />
            <Tool label="Imprimer"><PrintIcon /></Tool>
            <Tool label="Aperçu"><PreviewIcon /></Tool>
            <Sep />
            <Tool label="Orthographe"><SpellIcon /></Tool>
            <Tool label="Recherche"><ResearchIcon /></Tool>
            <Sep />
            <Tool label="Couper"><CutIcon /></Tool>
            <Tool label="Copier"><CopyIcon /></Tool>
            <Tool label="Coller"><PasteIcon /></Tool>
            <Drop label="Options de collage" muted />
            <Tool label="Reproduire la mise en forme"><PainterIcon /></Tool>
            <Sep />
            <Tool label="Annuler"><UndoIcon /></Tool>
            <Drop label="Liste d'annulation" />
            <Tool label="Rétablir"><RedoIcon /></Tool>
            <Drop label="Liste de rétablissement" muted />
            <Sep />
            <Tool label="Conversion en euros"><EuroConvertIcon /></Tool>
            <Tool label="Lien hypertexte"><LinkIcon /></Tool>
            <Tool label="Somme"><SigmaIcon /></Tool>
            <Drop label="Fonctions" />
            <Tool label="Tri croissant"><SortIcon top="A" bottom="Z" /></Tool>
            <Tool label="Tri décroissant"><SortIcon top="Z" bottom="A" /></Tool>
            <Sep />
            <Tool label="Graphique"><ChartIcon /></Tool>
            <Tool label="Aide"><HelpIcon /></Tool>
            <span className="w-1.5" />
            <BarEnd more />
          </div>
          <div className={BAR + " min-w-0 flex-1"}>
            <Grip />
            <Combo label="Police" value="Arial" size="wide" />
            <Combo label="Taille" value="14" size="narrow" />
            <span className="w-0.5" />
            <Sep />
            <Tool label="Gras" active>
              <span className="font-['Liberation_Sans',sans-serif] text-[14px] font-bold">G</span>
            </Tool>
            <Tool label="Italique">
              <span className="font-['Liberation_Serif',serif] text-[15px] font-bold italic">I</span>
            </Tool>
            <Tool label="Souligné">
              <span className="font-['Liberation_Serif',serif] text-[14px] font-bold underline">S</span>
            </Tool>
            <Sep />
            <Tool label="Aligner à gauche"><AlignIcon kind="left" /></Tool>
            <Tool label="Centrer" active><AlignIcon kind="center" /></Tool>
            <Tool label="Aligner à droite"><AlignIcon kind="right" /></Tool>
            <Tool label="Fusionner et centrer"><MergeIcon /></Tool>
            <Sep />
            <Tool label="Monétaire"><CurrencyIcon /></Tool>
            <Tool label="Pourcentage"><PercentIcon /></Tool>
            <Tool label="Milliers"><ThousandsIcon /></Tool>
            <Tool label="Euro"><EuroIcon /></Tool>
            <Tool label="Ajouter une décimale"><DecimalIcon more /></Tool>
            <Tool label="Réduire les décimales"><DecimalIcon more={false} /></Tool>
            <Sep />
            <Tool label="Diminuer le retrait"><IndentIcon right={false} /></Tool>
            <Tool label="Augmenter le retrait"><IndentIcon right /></Tool>
            <Sep />
            <Tool label="Bordures"><BordersIcon /></Tool>
            <Drop label="Types de bordure" />
            <Tool label="Remplissage"><FillIcon /></Tool>
            <Drop label="Couleurs de remplissage" />
            <Tool label="Couleur de police"><FontColorIcon /></Tool>
            <Drop label="Couleurs de police" />
            <span className="flex-1" />
            <BarEnd />
          </div>
        </div>

        <div className="flex gap-[5px] pt-px pl-[3px]">
          <div className={BAR}>
            <Grip />
            <Tool label="Exécuter la macro"><PlayIcon /></Tool>
            <Tool label="Enregistrer une macro"><RecordIcon /></Tool>
            <button type="button" className="w-[59px] pl-[3px] text-left">Sécurité...</button>
            <Sep />
            <Tool label="Visual Basic Editor"><ScriptIcon /></Tool>
            <Tool label="Boîte à outils"><ToolsIcon /></Tool>
            <Tool label="Mode Création"><RulerIcon /></Tool>
            <Sep />
            <Tool label="Microsoft Script Editor"><InfinityIcon /></Tool>
            <span className="w-0.5" />
            <BarEnd />
          </div>
          <div className={BAR}>
            <Grip />
            <Tool label="XLS"><XlsIcon /></Tool>
            <Tool label="Fenêtre"><AboutIcon /></Tool>
            <button type="button" className="w-[51px] pl-0.5 text-left">About...</button>
            <BarEnd />
          </div>
        </div>
      </div>

      {/* Formula bar */}
      <div className="flex h-[17px] shrink-0 items-stretch bg-[#9ebef5] pl-0.5 font-['Liberation_Sans',Arial,sans-serif] text-[13px]">
        <input aria-label="Zone Nom" defaultValue="K7" className="w-[92px] bg-white text-center" />
        <button type="button" aria-label="Liste des noms" className="flex w-5 items-center justify-center">
          <Svg w={7} h={4}><path d="M0 0h7L3.500 4z" fill="#000" /></Svg>
        </button>
        <button type="button" aria-label="Insérer une fonction" className="w-[55px] pr-1 text-right font-['Liberation_Serif',serif] italic">
          fx
        </button>
        <input aria-label="Barre de formule" defaultValue="10650" className="min-w-0 flex-1 bg-white pl-1.5" />
      </div>

      {/* Worksheet and vertical scroll bar */}
      <main className="flex min-h-0 flex-1 border-t border-[#80806f]">
        <Sheet />
        <div className="flex w-[17px] shrink-0 flex-col bg-[#f6f5ee]">
          <span className="h-1.5 border-b border-black bg-[#ece9d8]" />
          <button type="button" aria-label="Défiler vers le haut" className={SCROLL_BTN + " h-4"}>
            <Chevron d="M1 6.500L4.500 3 8 6.500" />
          </button>
          <div className="flex flex-[762] items-center justify-center rounded-xs border border-[#aac0f3] bg-linear-to-r from-[#cbdafe] to-[#b8cbf8]">
            <span className="h-[7px] w-1.5 bg-[repeating-linear-gradient(0deg,#eef4fe_0_1px,#9db5ee_1px_2px)]" />
          </div>
          <span className="flex-[36]" />
          <button type="button" aria-label="Défiler vers le bas" className={SCROLL_BTN + " h-4"}>
            <Chevron d="M1 3L4.500 6.500 8 3" />
          </button>
        </div>
      </main>

      {/* Sheet tabs and horizontal scroll bar */}
      <div className="flex h-[17px] shrink-0">
        <div className="flex min-w-0 flex-[763] items-stretch border-t border-[#80806f] font-['Liberation_Sans',Arial,sans-serif] text-[13px] leading-[14px]">
          {[
            ["Première feuille", "M2.500 1v7M8 1v7L4 4.500z"],
            ["Feuille précédente", "M6 1v7L2 4.500z"],
            ["Feuille suivante", "M3 1v7L7 4.500z"],
            ["Dernière feuille", "M7.500 1v7M2 1v7l4-3.500z"],
          ].map(([label, d]) => (
            <button key={label} type="button" aria-label={label} className="flex w-4 items-center justify-center">
              <Svg w={9} h={9}><path d={d} fill="#000" stroke="#000" strokeWidth="0.500" /></Svg>
            </button>
          ))}
          <Svg w={10} h={16}>
            <path d="M1.500 0v15" stroke="#a7a590" />
            <path d="M2 0l7 15h1V0z" fill="#fff" />
            <path d="M2 0l7 15" stroke="#000" strokeWidth="1.300" />
          </Svg>
          <button type="button" className="border-b border-black bg-white px-px pb-px text-[12px] font-bold">Graph</button>
          <Svg w={9} h={16}>
            <path d="M0 0h8L1 15H0z" fill="#fff" />
            <path d="M8 0L1 15M4 8l4 7" stroke="#000" strokeWidth="1.300" />
          </Svg>
          <button type="button" className="border-b border-[#80806f] px-0.5 pb-px text-[12px]">Data</button>
          <Svg w={10} h={16}><path d="M9 0L2 15" stroke="#000" strokeWidth="1.300" /></Svg>
        </div>
        <div className="flex min-w-0 flex-[499] bg-[#f6f5ee]">
          <span className="w-0.5 border-r border-black bg-[#ece9d8]" />
          <button type="button" aria-label="Défiler vers la gauche" className={SCROLL_BTN + " w-4"}>
            <Chevron d="M6.500 1L3 4.500 6.500 8" />
          </button>
          <div className="flex flex-[392] items-center justify-center rounded-xs border border-[#aac0f3] bg-linear-to-b from-[#cbdafe] to-[#b8cbf8]">
            <span className="h-1.5 w-[7px] bg-[repeating-linear-gradient(90deg,#eef4fe_0_1px,#9db5ee_1px_2px)]" />
          </div>
          <span className="flex-[68]" />
          <button type="button" aria-label="Défiler vers la droite" className={SCROLL_BTN + " w-4"}>
            <Chevron d="M3 1l3.500 3.500L3 8" />
          </button>
          <span className="w-1.5 border-r border-black bg-[#ece9d8]" />
        </div>
        <span className="w-[17px] shrink-0" />
      </div>

      {/* Status bar */}
      <div className="flex h-5 shrink-0 items-center justify-end gap-0.5 border-t border-white pr-0.5 pl-1">
        <span className="flex-1">Prêt</span>
        <span className="h-3.5 w-[34px] border border-[#d0cdbb]" />
        <span className="h-3.5 w-[111px] border border-[#d0cdbb]" />
        <span className="h-3.5 w-[22px] border border-[#d0cdbb]" />
        <span className="h-3.5 w-[22px] border border-[#d0cdbb]" />
        <span className="h-3.5 w-[27px] border border-[#d0cdbb] text-center leading-3">NUM</span>
        <span className="h-3.5 w-[22px] border border-[#d0cdbb]" />
        <span className="h-3.5 w-[22px] border border-[#d0cdbb]" />
        <span className="h-3.5 w-[20px] border border-[#d0cdbb]" />
      </div>

      {/* Task bar */}
      <footer className="flex h-[30px] shrink-0 items-stretch bg-linear-to-b from-[#3c81f3] via-[#245edb] to-[#1c4fc0] text-white">
        <button
          type="button"
          className="flex w-[135px] items-center gap-1 rounded-r-xl bg-linear-to-b from-[#5fb45c] via-[#379338] to-[#2c7d2e] pl-2.5 font-['Open_Sans',sans-serif] text-[17px] font-bold italic shadow-[1px_0_3px_0_#0c2c7a] [text-shadow:1px_1px_1px_#1d4a1e]"
        >
          <FlagIcon />
          démarrer
        </button>
        <div className="flex items-center gap-2 pl-3">
          <button type="button" aria-label="Afficher le Bureau"><DesktopIcon /></button>
          <button type="button" aria-label="Internet Explorer"><IeIcon /></button>
          <button type="button" aria-label="Microsoft Outlook"><OutlookIcon /></button>
          <button type="button" aria-label="Autres icônes" className="self-start pt-1.5 pl-0.5">
            <Svg w={9} h={7}><path d="M1 1l2.500 2.500L1 6M5 1l2.500 2.500L5 6" stroke="#cfe0ff" /></Svg>
          </button>
        </div>
        <button type="button" className="my-[3px] ml-[7px] flex w-40 items-center gap-1 rounded-xs bg-[#1a4cb4] pl-2.5 shadow-[inset_1px_1px_1px_0_#123a8c]">
          <ExcelIcon />
          Microsoft Excel - RCM...
        </button>
        <span className="flex-1" />
        <button type="button" className="w-[60px]">FR</button>
        <div className="flex items-center gap-0.5 border-l border-[#0b3f9e] bg-linear-to-b from-[#19b9f3] via-[#1290e8] to-[#0d7ad4] pr-3 pl-2.5">
          <BirdIcon />
          <KasperskyIcon />
          <NetOffIcon />
          <NetOffIcon />
          <WirelessIcon />
          <time className="pl-1">23:27</time>
        </div>
      </footer>
    </div>
  );
}
